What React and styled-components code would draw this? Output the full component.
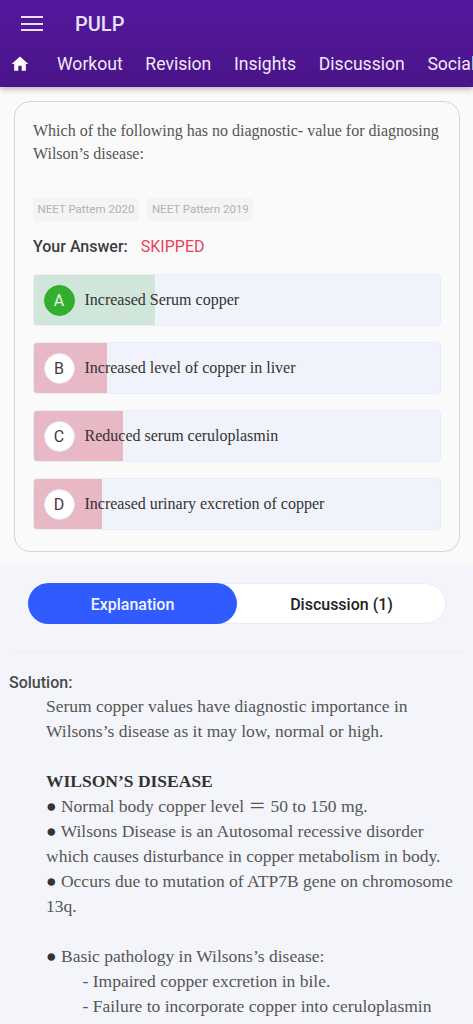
import React from "react";
import styled, { createGlobalStyle } from "styled-components";

const GlobalStyle = createGlobalStyle`
  * { box-sizing: border-box; }
  html, body { margin: 0; padding: 0; height: 1024px; overflow: hidden; background: #f4f5fb; }
  body { font-family: Roboto, "Liberation Sans", sans-serif; }
`;

const Page = styled.div`
  width: 473px;
  height: 1024px;
  overflow: hidden;
  display: flex;
  flex-direction: column;
`;

const Header = styled.header`
  position: relative;
  z-index: 2;
  flex: none;
  height: 87px;
  background: linear-gradient(180deg, #53189f 0%, #4b1488 100%);
  box-shadow: 0 2px 6px rgba(0, 0, 0, 0.3);
  color: #fff;
  overflow: hidden;
`;

const TopRow = styled.div`
  display: flex;
  align-items: center;
  height: 47px;
  padding-left: 21px;
`;

const Burger = styled.div`
  width: 22px;
  display: flex;
  flex-direction: column;
  gap: 4.5px;
  margin-right: 32px;
  & span {
    height: 2px;
    background: #e8e0f2;
  }
`;

const Brand = styled.div`
  font-size: 20px;
  font-weight: 500;
  color: #e9e1f3;
`;

const NavRow = styled.nav`
  display: flex;
  align-items: center;
  height: 34px;
  padding-left: 10px;
  white-space: nowrap;
`;

const HomeIcon = styled.svg`
  width: 20px;
  height: 20px;
  margin-right: 27px;
  flex: none;
`;

const NavItem = styled.span`
  font-size: 17.6px;
  margin-right: 22.6px;
  color: #efe9f6;
`;

const Top = styled.section`
  flex: none;
  background: #fafafa;
  height: 478px;
  padding: 14px 13px 0 14px;
`;

const Card = styled.div`
  height: 451px;
  border: 1px solid #d4d4d6;
  border-radius: 16px;
  padding: 17px 18px 0 18px;
`;

const Question = styled.p`
  margin: 0;
  font-family: "Liberation Serif", serif;
  font-size: 16px;
  line-height: 23px;
  color: #555;
`;

const Tags = styled.div`
  display: flex;
  gap: 8.5px;
  margin-top: 33px;
`;

const Tag = styled.span`
  height: 23px;
  line-height: 23px;
  padding: 0 4.5px;
  font-size: 11.5px;
  border-radius: 2px;
  background: #f4f4f4;
  color: #b2b2b2;
`;

const AnswerRow = styled.div`
  display: flex;
  gap: 13px;
  margin-top: 16px;
  font-size: 16px;
  line-height: 20px;
`;

const AnswerLabel = styled.span`
  font-weight: 500;
  color: #3c3c3c;
`;

const Skipped = styled.span`
  color: #e8415c;
`;

const Options = styled.div`
  display: flex;
  flex-direction: column;
  gap: 16px;
  margin-top: 17px;
`;

const Option = styled.div`
  position: relative;
  display: flex;
  align-items: center;
  height: 52px;
  padding-left: 9.5px;
  border: 1px solid #e8ecfb;
  border-radius: 4px;
  background: #f0f3fc;
  overflow: hidden;
`;

const Fill = styled.div`
  position: absolute;
  left: 0;
  top: 0;
  bottom: 0;
  background: ${({ $correct }) => ($correct ? "#d0e6da" : "#e8b8c4")};
`;

const Letter = styled.span`
  position: relative;
  flex: none;
  width: 31px;
  height: 31px;
  border-radius: 50%;
  display: flex;
  align-items: center;
  justify-content: center;
  font-size: 16px;
  background: ${({ $correct }) => ($correct ? "#34ae2e" : "#fff")};
  color: ${({ $correct }) => ($correct ? "#e8f6e6" : "#4a3a40")};
  border: 1px solid ${({ $correct }) => ($correct ? "#34ae2e" : "#e4e4f6")};
`;

const OptionText = styled.span`
  position: relative;
  margin-left: 10px;
  font-family: "Liberation Serif", serif;
  font-size: 16px;
  color: #333;
`;

const Bottom = styled.section`
  flex: 1;
  background: #f4f5fb;
  border-radius: 4px 4px 0 0;
  padding: 18px 9px 0;
`;

const Switch = styled.div`
  display: flex;
  width: 418px;
  height: 41px;
  margin: 0 0 0 19px;
  border-radius: 21px;
  background: #fff;
  box-shadow: inset 0 0 0 1px #e8ecfb;
`;

const SwitchTab = styled.button`
  flex: 1;
  border: 0;
  padding: 1px 0 0;
  border-radius: 21px;
  font-family: inherit;
  font-size: 16px;
  font-weight: 500;
  background: ${({ $active }) => ($active ? "#2f5bff" : "transparent")};
  color: ${({ $active }) => ($active ? "#f2f5ff" : "#222")};
`;

const Divider = styled.hr`
  margin: 28px 0 0;
  border: 0;
  border-top: 1px solid #eeeef3;
`;

const SolutionLabel = styled.div`
  margin-top: 20px;
  font-size: 16px;
  line-height: 20px;
  font-weight: 500;
  color: #484848;
`;

const Solution = styled.div`
  padding: 1px 0 0 37px;
  font-family: "Liberation Serif", "Noto Sans CJK SC", serif;
  font-size: 17.5px;
  line-height: 25px;
  color: #555;
  white-space: nowrap;
`;

const Line = styled.div`
  min-height: 25px;
  padding-left: ${({ $indent }) => ($indent ? "36.5px" : "0")};
`;

const Strong = styled.strong`
  color: #333;
`;

const Dot = styled.span`
  color: #333;
`;

const options = [
  { letter: "A", text: "Increased Serum copper", fill: 121, correct: true },
  { letter: "B", text: "Increased level of copper in liver", fill: 73 },
  { letter: "C", text: "Reduced serum ceruloplasmin", fill: 89 },
  { letter: "D", text: "Increased urinary excretion of copper", fill: 68 },
];

export default function App() {
  return (
    <Page>
      <GlobalStyle />
      <Header>
        <TopRow>
          <Burger>
            <span />
            <span />
            <span />
          </Burger>
          <Brand>PULP</Brand>
        </TopRow>
        <NavRow>
          <HomeIcon viewBox="0 0 24 24" fill="#fff">
            <path d="M10 20v-6h4v6h5v-8h3L12 3 2 12h3v8z" />
          </HomeIcon>
          <NavItem>Workout</NavItem>
          <NavItem>Revision</NavItem>
          <NavItem>Insights</NavItem>
          <NavItem>Discussion</NavItem>
          <NavItem>Social</NavItem>
        </NavRow>
      </Header>
      <Top>
        <Card>
          <Question>
            Which of the following has no diagnostic- value for diagnosing Wilson’s disease:
          </Question>
          <Tags>
            <Tag>NEET Pattern 2020</Tag>
            <Tag>NEET Pattern 2019</Tag>
          </Tags>
          <AnswerRow>
            <AnswerLabel>Your Answer:</AnswerLabel>
            <Skipped>SKIPPED</Skipped>
          </AnswerRow>
          <Options>
            {options.map((o) => (
              <Option key={o.letter}>
                <Fill $correct={o.correct} style={{ width: o.fill }} />
                <Letter $correct={o.correct}>{o.letter}</Letter>
                <OptionText>{o.text}</OptionText>
              </Option>
            ))}
          </Options>
        </Card>
      </Top>
      <Bottom>
        <Switch>
          <SwitchTab $active>Explanation</SwitchTab>
          <SwitchTab>Discussion (1)</SwitchTab>
        </Switch>
        <Divider />
        <SolutionLabel>Solution:</SolutionLabel>
        <Solution>
          <Line>Serum copper values have diagnostic importance in</Line>
          <Line>Wilsons’s disease as it may low, normal or high.</Line>
          <Line />
          <Line><Strong>WILSON’S DISEASE</Strong></Line>
          <Line><Dot>●</Dot> Normal body copper level ＝ 50 to 150 mg.</Line>
          <Line><Dot>●</Dot> Wilsons Disease is an Autosomal recessive disorder</Line>
          <Line>which causes disturbance in copper metabolism in body.</Line>
          <Line><Dot>●</Dot> Occurs due to mutation of ATP7B gene on chromosome</Line>
          <Line>13q.</Line>
          <Line />
          <Line><Dot>●</Dot> Basic pathology in Wilsons’s disease:</Line>
          <Line $indent>- Impaired copper excretion in bile.</Line>
          <Line $indent>- Failure to incorporate copper into ceruloplasmin</Line>
          <Line $indent>to form the final protein</Line>
        </Solution>
      </Bottom>
    </Page>
  );
}
